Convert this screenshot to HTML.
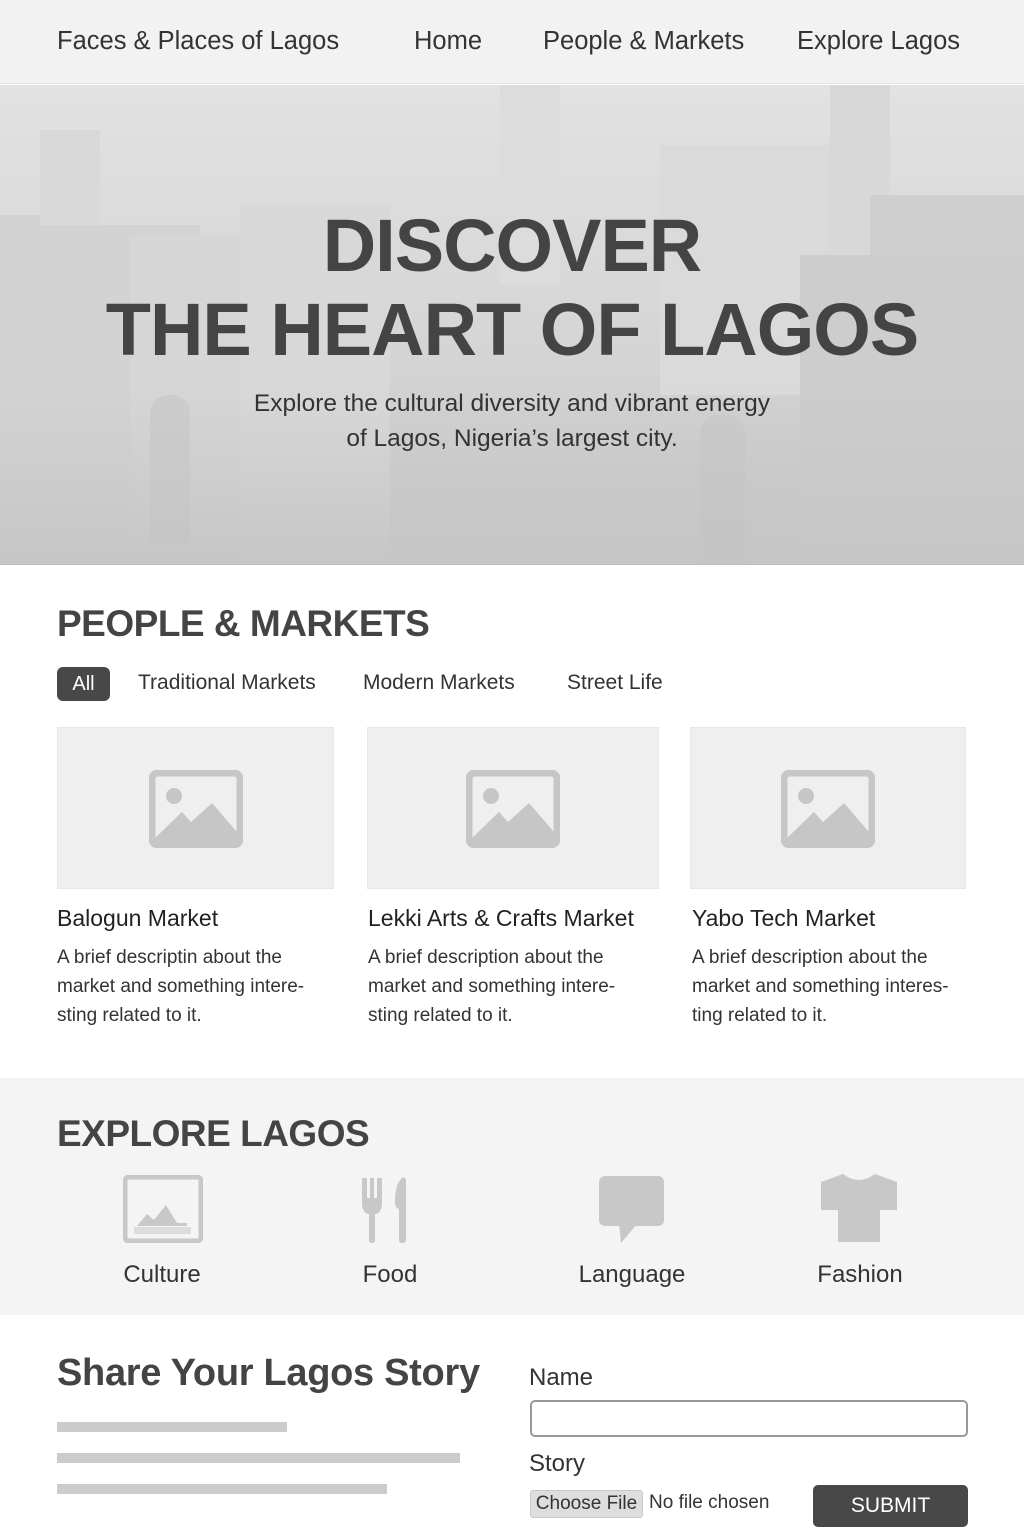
<!DOCTYPE html>
<html><head><meta charset="utf-8"><style>
*{margin:0;padding:0;box-sizing:border-box}
body{width:1024px;height:1536px;overflow:hidden;background:#fff;font-family:"Liberation Sans",sans-serif;color:#333;position:relative}
.a{position:absolute;white-space:nowrap}
nav{position:absolute;left:0;top:0;width:1024px;height:84px;background:#f2f2f2;border-bottom:1px solid #e2e2e2}
nav .a{font-size:25.5px;top:27px;color:#333}
.hero{position:absolute;left:0;top:85px;width:1024px;height:480px;background:linear-gradient(#e2e2e2,#d6d6d6 50%,#c8c8c8);overflow:hidden;border-bottom:1px solid #bbb}
.hero div{position:absolute}
h1{position:absolute;left:0;width:1024px;text-align:center;font-size:74px;font-weight:bold;color:#444;letter-spacing:-1px;line-height:84px;top:204px}
.sub{position:absolute;left:0;width:1024px;text-align:center;font-size:24.5px;line-height:35px;top:386px;color:#333}
h2{position:absolute;font-size:37px;font-weight:bold;color:#444;letter-spacing:-0.5px}
.tab{position:absolute;top:671px;font-size:21px;color:#333}
.img{position:absolute;top:727px;height:162px;background:#efefef;border:1px solid #e8e8e8}
.img svg{position:absolute;left:50%;top:42px;margin-left:-47px}
.ct{position:absolute;top:905px;font-size:23px;color:#222}
.cd{position:absolute;top:943px;font-size:19px;line-height:29px;color:#333}
.lbl{position:absolute;top:1261px;font-size:24px;color:#333;width:200px;text-align:center}
.bar{position:absolute;left:57px;height:10px;background:#ccc}
</style></head><body>
<nav>
<span class="a" style="left:57px">Faces &amp; Places of Lagos</span>
<span class="a" style="left:414px">Home</span>
<span class="a" style="left:543px">People &amp; Markets</span>
<span class="a" style="left:797px">Explore Lagos</span>
</nav>
<div class="hero">
<div style="left:0;top:130px;width:60px;height:350px;background:#d2d2d2"></div>
<div style="left:40px;top:45px;width:60px;height:200px;background:#d9d9d9"></div>
<div style="left:0;top:140px;width:200px;height:340px;background:#d3d3d3"></div>
<div style="left:130px;top:150px;width:110px;height:330px;background:#d6d6d6"></div>
<div style="left:240px;top:120px;width:150px;height:360px;background:#d8d8d8"></div>
<div style="left:500px;top:0;width:60px;height:200px;background:#dcdcdc"></div>
<div style="left:660px;top:60px;width:170px;height:250px;background:#dadada"></div>
<div style="left:830px;top:0;width:60px;height:180px;background:#d8d8d8"></div>
<div style="left:870px;top:110px;width:154px;height:370px;background:#cfcfcf"></div>
<div style="left:800px;top:170px;width:224px;height:310px;background:#cdcdcd"></div>
<div style="left:0;top:300px;width:1024px;height:180px;background:linear-gradient(rgba(204,204,204,0),#c6c6c6)"></div>
<div style="left:150px;top:310px;width:40px;height:150px;background:#c4c4c4;border-radius:18px 18px 4px 4px;opacity:.5"></div>
<div style="left:700px;top:330px;width:45px;height:150px;background:#c4c4c4;border-radius:18px 18px 4px 4px;opacity:.5"></div>
</div>
<h1>DISCOVER<br>THE HEART OF LAGOS</h1>
<div class="sub">Explore the cultural diversity and vibrant energy<br>of Lagos, Nigeria’s largest city.</div>

<h2 style="left:57px;top:603px">PEOPLE &amp; MARKETS</h2>
<div style="position:absolute;left:57px;top:667px;width:53px;height:34px;background:#484848;border-radius:6px;color:#fff;font-size:20px;text-align:center;line-height:34px">All</div>
<span class="tab" style="left:138px">Traditional Markets</span>
<span class="tab" style="left:363px">Modern Markets</span>
<span class="tab" style="left:567px">Street Life</span>

<div class="img" style="left:57px;width:277px"><svg width="94" height="78" viewBox="0 0 94 78"><rect x="3" y="3" width="88" height="72" rx="6" fill="none" stroke="#c6c6c6" stroke-width="7"/><circle cx="25" cy="26" r="8" fill="#c6c6c6"/><path d="M6 68 L33 42 L42 52 L63 33 L88 62 L88 72 L6 72Z" fill="#c6c6c6"/></svg></div>
<div class="img" style="left:367px;width:292px"><svg width="94" height="78" viewBox="0 0 94 78"><rect x="3" y="3" width="88" height="72" rx="6" fill="none" stroke="#c6c6c6" stroke-width="7"/><circle cx="25" cy="26" r="8" fill="#c6c6c6"/><path d="M6 68 L33 42 L42 52 L63 33 L88 62 L88 72 L6 72Z" fill="#c6c6c6"/></svg></div>
<div class="img" style="left:690px;width:276px"><svg width="94" height="78" viewBox="0 0 94 78"><rect x="3" y="3" width="88" height="72" rx="6" fill="none" stroke="#c6c6c6" stroke-width="7"/><circle cx="25" cy="26" r="8" fill="#c6c6c6"/><path d="M6 68 L33 42 L42 52 L63 33 L88 62 L88 72 L6 72Z" fill="#c6c6c6"/></svg></div>

<span class="ct" style="left:57px">Balogun Market</span>
<span class="ct" style="left:368px">Lekki Arts &amp; Crafts Market</span>
<span class="ct" style="left:692px">Yabo Tech Market</span>
<div class="cd" style="left:57px">A brief descriptin about the<br>market and something intere-<br>sting related to it.</div>
<div class="cd" style="left:368px">A brief description about the<br>market and something intere-<br>sting related to it.</div>
<div class="cd" style="left:692px">A brief description about the<br>market and something interes-<br>ting related to it.</div>

<div style="position:absolute;left:0;top:1078px;width:1024px;height:237px;background:#f4f4f4"></div>
<h2 style="left:57px;top:1113px">EXPLORE LAGOS</h2>
<svg class="a" style="left:123px;top:1175px" width="80" height="68" viewBox="0 0 80 68"><rect x="2" y="2" width="76" height="64" rx="4" fill="none" stroke="#c8c8c8" stroke-width="5"/><path d="M14 51 L24 39 L31 45 L43 30 L54 48 L64 48 L64 51Z" fill="#c8c8c8"/><rect x="11" y="52" width="57" height="7" fill="#dcdcdc"/></svg>
<svg class="a" style="left:360px;top:1175px" width="52" height="68" viewBox="0 0 52 68"><path d="M2 3 v25 q0 10 7 11 v26 q0 3 3 3 q3 0 3 -3 v-26 q7 -1 7 -11 v-25 h-5 v20 h-3 v-20 h-4 v20 h-3 v-20z" fill="#c8c8c8"/><path d="M43 2 q-8 6 -8 25 q0 6 4 7 v31 q0 3 3 3 q4 0 4 -3 v-61z" fill="#c8c8c8"/></svg>
<svg class="a" style="left:599px;top:1176px" width="66" height="68" viewBox="0 0 66 68"><rect x="0" y="0" width="65" height="50" rx="6" fill="#c8c8c8"/><path d="M20 48 L22 67 L38 48Z" fill="#c8c8c8"/></svg>
<svg class="a" style="left:819px;top:1172px" width="80" height="72" viewBox="0 0 80 72"><path d="M2 10 L24 2 Q40 14 56 2 L78 10 L78 38 L61 38 L61 70 L19 70 L19 38 L2 38Z" fill="#c8c8c8"/></svg>
<div class="lbl" style="left:62px">Culture</div>
<div class="lbl" style="left:290px">Food</div>
<div class="lbl" style="left:532px">Language</div>
<div class="lbl" style="left:760px">Fashion</div>

<h2 style="left:57px;top:1352px;font-size:38px;letter-spacing:-0.3px;text-transform:none">Share Your Lagos Story</h2>
<div class="bar" style="top:1422px;width:230px"></div>
<div class="bar" style="top:1453px;width:403px"></div>
<div class="bar" style="top:1484px;width:330px"></div>
<span class="a" style="left:529px;top:1364px;font-size:24px">Name</span>
<div style="position:absolute;left:530px;top:1400px;width:438px;height:37px;border:2px solid #999;border-radius:5px;background:#fff"></div>
<span class="a" style="left:529px;top:1450px;font-size:24px">Story</span>
<div style="position:absolute;left:530px;top:1490px;width:113px;height:28px;background:#ddd;border:1px solid #c8c8c8;border-radius:3px;font-size:19px;line-height:26px;text-align:center;color:#333">Choose File</div>
<span class="a" style="left:649px;top:1492px;font-size:19px;color:#333">No file chosen</span>
<div style="position:absolute;left:813px;top:1485px;width:155px;height:42px;background:#484848;border-radius:5px;color:#fff;font-size:21px;line-height:42px;text-align:center">SUBMIT</div>
</body></html>
